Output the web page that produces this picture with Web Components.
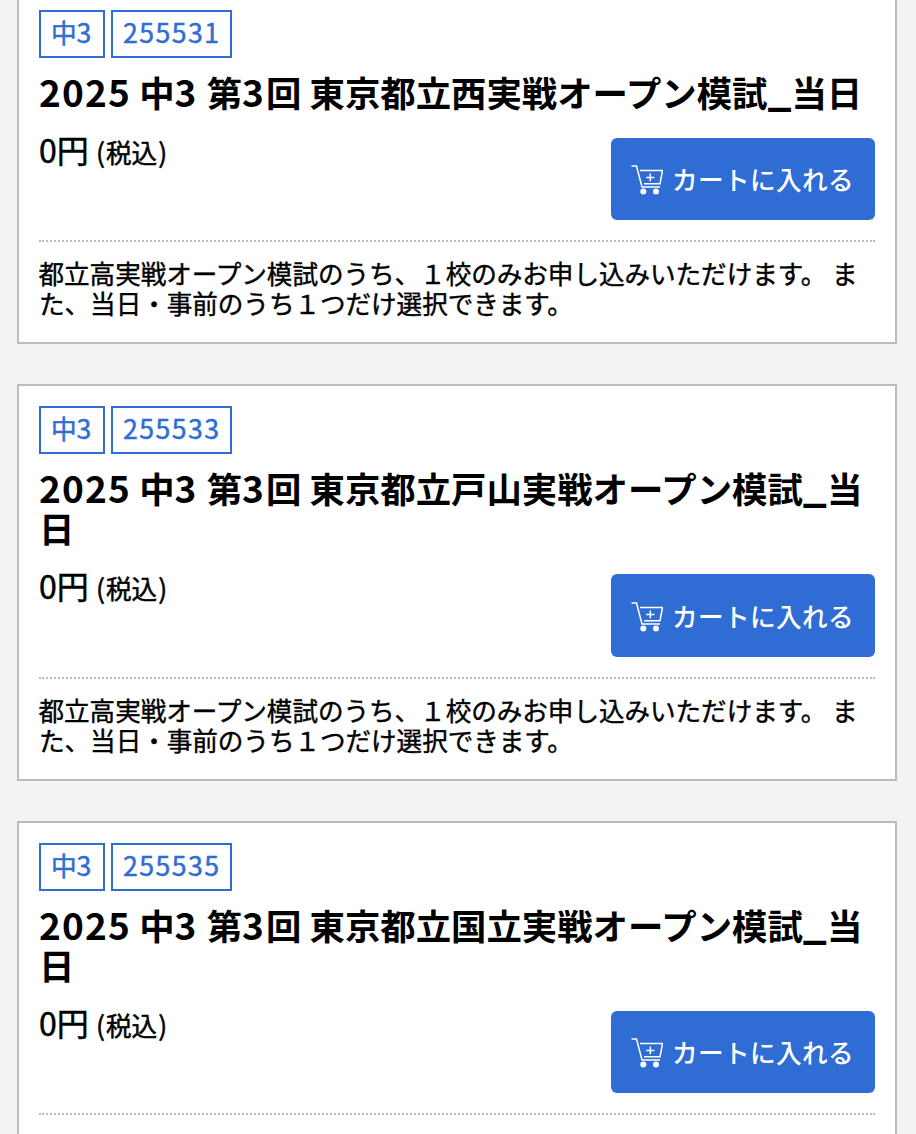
<!DOCTYPE html>
<html lang="ja">
<head>
<meta charset="utf-8">
<title>模試一覧</title>
<style>
html{overflow:hidden}
body{margin:0;height:1134px;overflow:hidden;background:#f3f3f3;color:#000;font-family:"Noto Sans CJK JP",sans-serif;font-size:25.6px}
</style>
</head>
<body>
<exam-list>
  <exam-card level="中" grade="3" code="255531" school="西"></exam-card>
  <exam-card level="中" grade="3" code="255533" school="戸山" style="--button-height:83px"></exam-card>
  <exam-card level="中" grade="3" code="255535" school="国立"></exam-card>
</exam-list>
<script>
class ExamList extends HTMLElement {
  constructor() {
    super();
    this.attachShadow({mode:'open'}).innerHTML = `
<style>
:host{display:flex;flex-direction:column;gap:40px;margin:-12px 19px 0 17px}
</style><slot></slot>`;
  }
}
class CodeTag extends HTMLElement {
  constructor() {
    super();
    this.attachShadow({mode:'open'}).innerHTML = `
<style>
:host{display:block;box-sizing:border-box;height:48px;border:2px solid #2f6dd5;padding:0 10px;color:#2f6dd5;line-height:39px;white-space:nowrap;font-weight:400;-webkit-text-stroke:.5px #2f6dd5}
</style><slot></slot>`;
  }
}
class CartButton extends HTMLElement {
  constructor() {
    super();
    this.attachShadow({mode:'open'}).innerHTML = `
<style>
:host{display:block}
button{display:flex;align-items:center;box-sizing:border-box;width:264px;height:var(--button-height,82px);margin:0;padding:0 0 0 20px;border:0;border-radius:6px;background:#2f6dd5;color:#fff;font:500 25.6px/38px "Noto Sans CJK JP",sans-serif;white-space:nowrap}
svg{flex:none;width:32px;height:32px;margin-right:9px}
span{letter-spacing:.4px}
</style>
<button><svg viewBox="0 0 32 32" fill="none" stroke="#fff" stroke-width="1.5"><path d="M0.5 3H5.5L11 24H29M9 7.5H31.5L29 20.8H13"/><path d="M19.3 10.5V18.3M15.2 14.4H23.4"/><g fill="#fff" stroke="none"><circle cx="12.3" cy="28.6" r="3"/><circle cx="25" cy="28.6" r="3"/></g></svg><span><slot></slot></span></button>`;
  }
}
class ExamCard extends HTMLElement {
  constructor() {
    super();
    const a = n => this.getAttribute(n);
    this.attachShadow({mode:'open'}).innerHTML = `
<style>
:host{display:block;box-sizing:border-box;border:2px solid #bbb;background:#fff;padding:20px 20px 23px}
.tags{display:flex;gap:6px}
.tags i{font-style:normal;font-size:26.6px;line-height:1;letter-spacing:1.5px}
.tags code-tag:first-child{width:66px}
.tags code-tag:last-child{width:121px}
h2{margin:14px 0 26px;font-size:35.4px;line-height:40px;font-weight:700;word-break:break-all}
h2 i{font-style:normal;font-size:37px;line-height:1;letter-spacing:1.2px}
h2 i+i{letter-spacing:2.2px}
h2 b{font-size:42px;line-height:0;vertical-align:2px}
.buy{display:flex;justify-content:space-between;align-items:flex-start}
.price{font-size:32px;line-height:26px;margin-top:-2px;-webkit-text-stroke:.5px #000}
.price small{font-size:25.6px}
.price small span{margin:0 1px 0 0;font-size:26.6px;line-height:1}
.price small span:last-child{margin:0 0 0 1px}
p{margin:20px 0 0;border-top:2px dotted #bbb;padding:16px 0 1px;line-height:30px;letter-spacing:-.05px;-webkit-text-stroke:.4px #000;text-indent:-.5px}
</style>
<div class="tags"><code-tag>${a('level')}<i>${a('grade')}</i></code-tag><code-tag><i>${a('code')}</i></code-tag></div>
<h2><i>2025</i> ${a('level')}<i>${a('grade')}</i> 第<i>3</i>回 東京都立${a('school')}実戦オープン模試<b>_</b>当日</h2>
<div class="buy"><div class="price">0円 <small><span>(</span>税込<span>)</span></small></div><cart-button>カートに入れる</cart-button></div>
<p>都立高実戦オープン模試のうち、１校のみお申し込みいただけます。 また、当日・事前のうち１つだけ選択できます。</p>`;
  }
}
customElements.define('exam-list', ExamList);
customElements.define('code-tag', CodeTag);
customElements.define('cart-button', CartButton);
customElements.define('exam-card', ExamCard);
</script>
</body>
</html>
